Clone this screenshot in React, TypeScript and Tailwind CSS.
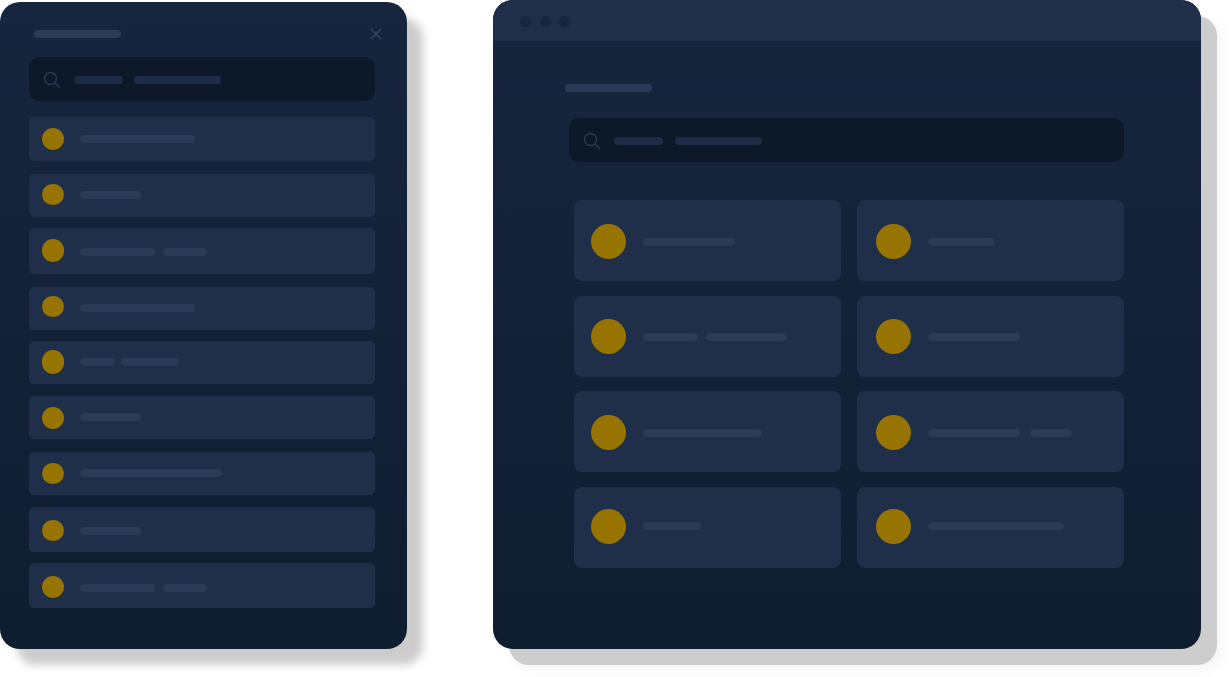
import React from 'react';

type Row = { box: string; dot: string; barTop: string; gap: string; bars: string[] };

// the side list is slightly uneven in the design, so each row keeps its own numbers
const sideRows: Row[] = [
  { box: 'h-[44px] mt-0', dot: 'mt-[11px] h-[22px]', barTop: 'mt-[18px]', gap: 'gap-2', bars: ['w-[115px]'] },
  { box: 'h-[43px] mt-[13px]', dot: 'mt-[9.5px] h-[21px]', barTop: 'mt-[17px]', gap: 'gap-2', bars: ['w-[61px]'] },
  { box: 'h-[46px] mt-[11px]', dot: 'mt-[11px] h-[23px]', barTop: 'mt-[20px]', gap: 'gap-2', bars: ['w-[75px]', 'w-[44px]'] },
  { box: 'h-[43px] mt-[13px]', dot: 'mt-[9px] h-[21px]', barTop: 'mt-[17px]', gap: 'gap-2', bars: ['w-[115px]'] },
  { box: 'h-[43px] mt-[11px]', dot: 'mt-[9px] h-[24px]', barTop: 'mt-[17px]', gap: 'gap-[6px]', bars: ['w-[35px]', 'w-[58px]'] },
  { box: 'h-[43px] mt-[12px]', dot: 'mt-[11px] h-[22px]', barTop: 'mt-[17px]', gap: 'gap-2', bars: ['w-[61px]'] },
  { box: 'h-[43px] mt-[13px]', dot: 'mt-[11px] h-[21px]', barTop: 'mt-[17px]', gap: 'gap-2', bars: ['w-[142px]'] },
  { box: 'h-[45px] mt-[12px]', dot: 'mt-[13px] h-[21px]', barTop: 'mt-[20px]', gap: 'gap-2', bars: ['w-[61px]'] },
  { box: 'h-[45px] mt-[11px]', dot: 'mt-[12.5px] h-[22px]', barTop: 'mt-[21px]', gap: 'gap-2', bars: ['w-[75px]', 'w-[44px]'] },
];

type Card = { pad: string; dot: string; barTop: string; gap: string; bars: string[] };

const gridCards: Card[] = [
  { pad: 'pl-[17px]', dot: 'mt-[24px]', barTop: 'mt-[37.5px]', gap: 'gap-2', bars: ['w-[92px]'] },
  { pad: 'pl-[19px]', dot: 'mt-[24px]', barTop: 'mt-[37.5px]', gap: 'gap-2', bars: ['w-[66px]'] },
  { pad: 'pl-[17px]', dot: 'mt-[23.5px]', barTop: 'mt-[37px]', gap: 'gap-2', bars: ['w-[55px]', 'w-[81px]'] },
  { pad: 'pl-[19px]', dot: 'mt-[23.5px]', barTop: 'mt-[37px]', gap: 'gap-2', bars: ['w-[92px]'] },
  { pad: 'pl-[17px]', dot: 'mt-[24px]', barTop: 'mt-[37.5px]', gap: 'gap-2', bars: ['w-[119px]'] },
  { pad: 'pl-[19px]', dot: 'mt-[24px]', barTop: 'mt-[37.5px]', gap: 'gap-[10px]', bars: ['w-[92px]', 'w-[42px]'] },
  { pad: 'pl-[17px]', dot: 'mt-[22px]', barTop: 'mt-[35.5px]', gap: 'gap-2', bars: ['w-[58px]'] },
  { pad: 'pl-[19px]', dot: 'mt-[22px]', barTop: 'mt-[35.5px]', gap: 'gap-2', bars: ['w-[136px]'] },
];

function SearchIcon() {
  return (
    <svg width="18" height="18" viewBox="0 0 18 18" fill="none" stroke="#2b3a54" strokeWidth="1.4" className="shrink-0">
      <circle cx="7.5" cy="7.5" r="6" />
      <path d="M12 12l5 5" />
    </svg>
  );
}

function Bar({ width }: { width: string }) {
  return <div className={`h-2 rounded bg-[#2a3a57] ${width}`} />;
}

function SearchBox({ className, gap }: { className: string; gap: string }) {
  return (
    <div className={`flex h-[44px] items-center rounded-[10px] bg-[#0d1829] pl-[14px] pt-[2px] ${className}`}>
      <SearchIcon />
      <div className="ml-[13px] h-2 w-[49px] rounded bg-[#1e2d47]" />
      <div className={`h-2 w-[87px] rounded bg-[#1e2d47] ${gap}`} />
    </div>
  );
}

export default function App() {
  return (
    <div className="flex h-[677px] w-[1232px] items-start overflow-hidden bg-white">
      {/* Mobile panel */}
      <aside className="mt-[2px] h-[647px] w-[407px] shrink-0 rounded-[20px] bg-gradient-to-b from-[#16263e] to-[#0f1d30] pl-[29px] pr-[32px] pt-[28px] shadow-[16px_16px_8px_0_rgba(0,0,0,0.2)]">
        <div className="flex h-[7px] items-center justify-between">
          <div className="ml-[5px] h-2 w-[87px] rounded bg-[#2a3a57]" />
          <svg width="12" height="12" viewBox="0 0 12 12" stroke="#38475f" strokeWidth="1.3" className="-mr-[7px]">
            <path d="M1 1l10 10M11 1L1 11" />
          </svg>
        </div>
        <SearchBox className="mt-[20px] w-[346px]" gap="ml-[11px]" />
        <div className="mt-[16px] flex flex-col">
          {sideRows.map((row, i) => (
            <div key={i} className={`flex w-[346px] items-start rounded-[5px] bg-[#1f2e49] pl-[13px] ${row.box}`}>
              <div className={`w-[22px] shrink-0 rounded-full bg-[#977400] ${row.dot}`} />
              <div className={`ml-[16px] flex ${row.gap} ${row.barTop}`}>
                {row.bars.map((w, j) => (
                  <Bar key={j} width={w} />
                ))}
              </div>
            </div>
          ))}
        </div>
      </aside>

      {/* Desktop window */}
      <main className="ml-[86px] h-[649px] w-[707.5px] shrink-0 overflow-hidden rounded-[20px] bg-gradient-to-b from-[#16263e] to-[#0f1d30] shadow-[16px_16px_0_0_#cdcdcd,20px_20px_16px_0_rgba(0,0,0,0.05)]">
        <div className="flex h-[41px] items-center gap-[8.5px] bg-[#1f2e49] pl-[27px] pt-[2px]">
          <div className="size-[11px] rounded-full bg-[#16263e]" />
          <div className="size-[11px] rounded-full bg-[#16263e]" />
          <div className="size-[11px] rounded-full bg-[#16263e]" />
        </div>
        <div className="ml-[72px] mt-[43px] h-2 w-[87px] rounded bg-[#2a3a57]" />
        <SearchBox className="ml-[76px] mt-[26px] w-[555px]" gap="ml-[12px]" />
        <div className="ml-[81px] mt-[38px] grid w-[550px] grid-cols-[267px_267px] gap-x-[16px] gap-y-[14.67px]">
          {gridCards.map((card, i) => (
            <div key={i} className={`flex h-[81px] items-start rounded-lg bg-[#1f2e49] ${card.pad}`}>
              <div className={`size-[35px] shrink-0 rounded-full bg-[#977400] ${card.dot}`} />
              <div className={`ml-[17px] flex ${card.gap} ${card.barTop}`}>
                {card.bars.map((w, j) => (
                  <Bar key={j} width={w} />
                ))}
              </div>
            </div>
          ))}
        </div>
      </main>
    </div>
  );
}
